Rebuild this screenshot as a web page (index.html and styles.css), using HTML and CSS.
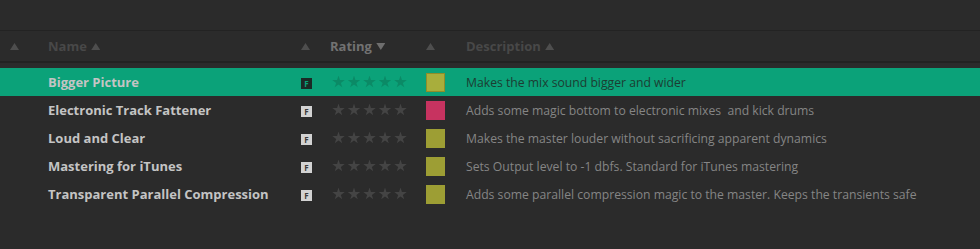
FILE: index.html
```html
<!DOCTYPE html>
<html lang="en">
<head>
  <meta charset="UTF-8" />
  <title>Presets</title>
  <link rel="stylesheet" href="styles.css">
</head>
<body>

  <div class="browser">
    <!-- Top strip -->
    <div class="topbar"></div>

    <!-- Column headers -->
    <div class="head-row">
      <div class="cell c-sort"><span class="arrow up"></span></div>
      <div class="cell c-name">Name <span class="arrow up"></span></div>
      <div class="cell c-flag"><span class="arrow up"></span></div>
      <div class="cell c-rating active">Rating <span class="arrow down"></span></div>
      <div class="cell c-color"><span class="arrow up"></span></div>
      <div class="cell c-desc">Description <span class="arrow up"></span></div>
    </div>

    <!-- Preset rows -->
    <div class="rows">
      <div class="row selected">
        <div class="cell c-sort"></div>
        <div class="cell c-name">Bigger Picture</div>
        <div class="cell c-flag"><span class="badge">F</span></div>
        <div class="cell c-rating stars"><i></i><i></i><i></i><i></i><i></i></div>
        <div class="cell c-color"><span class="swatch olive"></span></div>
        <div class="cell c-desc">Makes the mix sound bigger and wider</div>
      </div>
      <div class="row">
        <div class="cell c-sort"></div>
        <div class="cell c-name">Electronic Track Fattener</div>
        <div class="cell c-flag"><span class="badge">F</span></div>
        <div class="cell c-rating stars"><i></i><i></i><i></i><i></i><i></i></div>
        <div class="cell c-color"><span class="swatch pink"></span></div>
        <div class="cell c-desc">Adds some magic bottom to electronic mixes&nbsp; and kick drums</div>
      </div>
      <div class="row">
        <div class="cell c-sort"></div>
        <div class="cell c-name">Loud and Clear</div>
        <div class="cell c-flag"><span class="badge">F</span></div>
        <div class="cell c-rating stars"><i></i><i></i><i></i><i></i><i></i></div>
        <div class="cell c-color"><span class="swatch olive"></span></div>
        <div class="cell c-desc">Makes the master louder without sacrificing apparent dynamics</div>
      </div>
      <div class="row">
        <div class="cell c-sort"></div>
        <div class="cell c-name">Mastering for iTunes</div>
        <div class="cell c-flag"><span class="badge">F</span></div>
        <div class="cell c-rating stars"><i></i><i></i><i></i><i></i><i></i></div>
        <div class="cell c-color"><span class="swatch olive"></span></div>
        <div class="cell c-desc">Sets Output level to -1 dbfs. Standard for iTunes mastering</div>
      </div>
      <div class="row">
        <div class="cell c-sort"></div>
        <div class="cell c-name">Transparent Parallel Compression</div>
        <div class="cell c-flag"><span class="badge">F</span></div>
        <div class="cell c-rating stars"><i></i><i></i><i></i><i></i><i></i></div>
        <div class="cell c-color"><span class="swatch olive"></span></div>
        <div class="cell c-desc">Adds some parallel compression magic to the master. Keeps the transients safe</div>
      </div>
    </div>
  </div>

</body>
</html>
```

FILE: styles.css
```css
/* Dark preset browser */
body {
  margin: 0;
  padding: 0;
  background-color: #2b2b2b;
  font-family: 'Open Sans', 'Liberation Sans', sans-serif;
  font-size: 13px;
  color: #858585;
}

.browser {
  width: 980px;
  height: 249px;
  overflow: hidden;
}

/* Empty strip above the headers */
.topbar {
  height: 30px;
  border-bottom: 1px solid #232323;
}

/* Shared column grid */
.head-row,
.row {
  display: grid;
  grid-template-columns: 40px 256px 24px 98px 38px 1fr;
  align-items: center;
}

.cell {
  white-space: nowrap;
}

.c-sort   { padding-left: 10px; }
.c-name   { padding-left: 8px; }
.c-flag   { padding-left: 5px; }
.c-rating { padding-left: 10px; }
.c-color  { padding-left: 8px; }
.c-desc   { padding-left: 10px; }

/* Header row */
.head-row {
  height: 30px;
  border-bottom: 2px solid #222;
  font-weight: 700;
  color: #484848;
}

.head-row .active {
  color: #727272;
}

/* Sort arrows */
.arrow {
  display: inline-block;
  width: 9px;
  height: 7px;
  margin-left: 1px;
  background-color: #4e4e4e;
  vertical-align: 1px;
}

.head-row .c-sort .arrow,
.head-row .c-flag .arrow,
.head-row .c-color .arrow {
  margin-left: 0;
}

.arrow.up {
  clip-path: polygon(50% 0, 100% 100%, 0 100%);
}

.arrow.down {
  clip-path: polygon(0 0, 100% 0, 50% 100%);
  background-color: #6e6e6e;
}

/* Rows */
.rows {
  margin-top: 5px;
}

.row {
  height: 28px;
}

.row .c-name {
  font-weight: 700;
  color: #c4c4c4;
}

.row .c-desc {
  font-size: 12.2px;
}

.row.selected {
  background-color: #0ba279;
}

.row.selected .c-desc {
  color: #1c3d32;
}

/* Factory badge */
.badge {
  display: inline-flex;
  align-items: center;
  justify-content: center;
  width: 11px;
  height: 11px;
  background-color: #d2d2d2;
  color: #3a3a3a;
  font-size: 8px;
  font-weight: 700;
  line-height: 1;
  vertical-align: middle;
}

.selected .badge {
  background-color: #1b2a25;
  color: #0ba279;
}

/* Rating stars */
.stars {
  display: flex;
  gap: 2.5px;
  padding-left: 12px;
}

.stars i {
  display: block;
  width: 13px;
  height: 13px;
  background-color: #444;
  clip-path: polygon(50% 0, 61% 35%, 98% 35%, 68% 57%, 79% 91%, 50% 70%, 21% 91%, 32% 57%, 2% 35%, 39% 35%);
}

.selected .stars i {
  background-color: #0b8a66;
}

/* Colour swatch */
.swatch {
  display: block;
  width: 19px;
  height: 19px;
  box-sizing: border-box;
}

.swatch.olive { background-color: #9d9e34; }
.swatch.pink  { background-color: #c73360; }

.selected .swatch {
  border: 1px solid #8f8d2a;
  background-color: #a8ae3c;
}
```
